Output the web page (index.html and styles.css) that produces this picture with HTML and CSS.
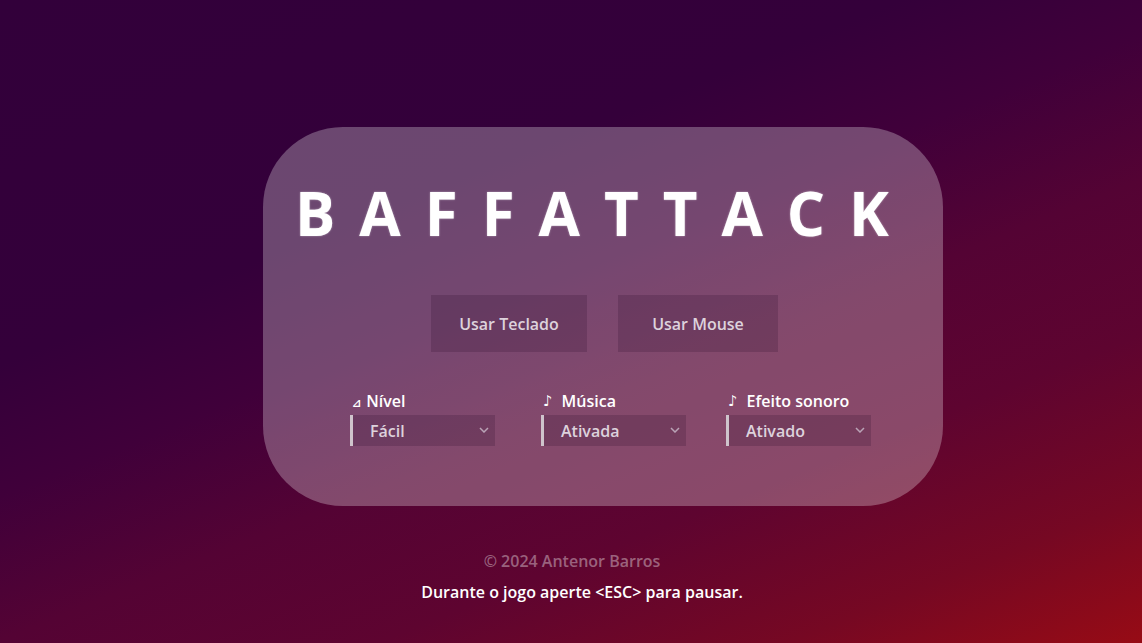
FILE: index.html
```html
<!DOCTYPE html>
<html lang="pt">
<head>
<meta charset="utf-8">
<title>Baffattack</title>
<link rel="stylesheet" href="styles.css">
</head>
<body>
<main class="page">
  <section class="card">
    <h1 class="title">BAFFATTACK</h1>
    <div class="buttons">
      <button class="btn btn-keyboard">Usar Teclado</button>
      <button class="btn btn-mouse">Usar Mouse</button>
    </div>
    <div class="options">
      <div class="opt">
        <div class="opt-label"><span class="ico ico-tri">⊿</span>Nível</div>
        <div class="sel"><span class="sel-text">Fácil</span>
          <svg class="chev" width="10" height="6" viewBox="0 0 10 6"><path d="M1 1l4 4 4-4" fill="none" stroke="#b9a3b6" stroke-width="1.5"/></svg>
        </div>
      </div>
      <div class="opt">
        <div class="opt-label"><span class="ico ico-note">♪</span>Música</div>
        <div class="sel"><span class="sel-text">Ativada</span>
          <svg class="chev" width="10" height="6" viewBox="0 0 10 6"><path d="M1 1l4 4 4-4" fill="none" stroke="#b9a3b6" stroke-width="1.5"/></svg>
        </div>
      </div>
      <div class="opt">
        <div class="opt-label"><span class="ico ico-note">♪</span>Efeito sonoro</div>
        <div class="sel"><span class="sel-text">Ativado</span>
          <svg class="chev" width="10" height="6" viewBox="0 0 10 6"><path d="M1 1l4 4 4-4" fill="none" stroke="#b9a3b6" stroke-width="1.5"/></svg>
        </div>
      </div>
    </div>
  </section>
  <footer class="footer">
    <p class="copy">© 2024 Antenor Barros</p>
    <p class="hint">Durante o jogo aperte &lt;ESC&gt; para pausar.</p>
  </footer>
</main>
</body>
</html>
```
FILE: styles.css
```css
html, body {
  margin: 0;
  padding: 0;
  height: 100%;
}
body {
  font-family: "Open Sans", "Liberation Sans", sans-serif;
  background: linear-gradient(158deg, #32003a 0%, #34003a 33%, #40003a 45%, #540334 58%, #5e0430 72%, #760823 87%, #970b15 100%);
  overflow: hidden;
  color: #fff;
}
.page {
  height: 643px;
  padding-top: 127px;
  box-sizing: border-box;
}
.card {
  margin-left: 263px;
  width: 680px;
  height: 379px;
  box-sizing: border-box;
  border-radius: 80px;
  background: rgba(255, 255, 255, 0.28);
  padding-top: 46px;
}
.title {
  margin: 0;
  font-size: 60px;
  font-weight: 700;
  line-height: 80px;
  letter-spacing: 24px;
  text-indent: 32px;
  color: #fff;
  text-shadow: 0 0 2px rgba(255,255,255,0.5);
}
.buttons {
  display: flex;
  gap: 31px;
  margin-top: 42px;
  padding-left: 168px;
}
.btn {
  font-family: "Open Sans", "Liberation Sans", sans-serif;
  font-size: 16px;
  font-weight: 600;
  color: #ddd2dc;
  background: rgba(40, 10, 40, 0.2);
  border: none;
  height: 57px;
  padding: 0;
  cursor: pointer;
}
.btn-keyboard { width: 156px; }
.btn-mouse { width: 160px; }
.options {
  display: grid;
  grid-template-columns: 191px 185px 145px;
  margin-top: 38px;
  padding-left: 87px;
}
.opt-label {
  font-size: 16px;
  font-weight: 600;
  line-height: 22px;
  height: 22px;
  margin-bottom: 3px;
  color: #fff;
  display: flex;
  align-items: center;
  overflow: visible;
}
.ico {
  display: inline-block;
  line-height: 22px;
  height: 22px;
  color: #fff;
  font-family: "DejaVu Sans", sans-serif;
}
.ico-tri {
  font-size: 11px;
  margin-left: 2px;
  margin-right: 5px;
  padding-top: 3px;
  box-sizing: border-box;
}
.ico-note {
  font-size: 15px;
  margin-left: 2px;
  margin-right: 9px;
}
.sel {
  position: relative;
  width: 145px;
  height: 31px;
  box-sizing: border-box;
  border-left: 3px solid #cfc4cc;
  background: rgba(40, 10, 40, 0.2);
  display: flex;
  align-items: center;
  padding-left: 17px;
  font-size: 16px;
  font-weight: 600;
  color: #ddd2dc;
}
.chev {
  position: absolute;
  right: 6px;
  top: 12px;
}
.footer {
  text-align: center;
  margin-top: 44px;
  padding-left: 2px;
}
.footer p {
  margin: 0;
  font-size: 16px;
  font-weight: 600;
  line-height: 22px;
}
.copy {
  color: rgba(255, 255, 255, 0.38);
}
.hint {
  margin-top: 9px !important;
  color: #fff;
  padding-left: 20px;
}
```
